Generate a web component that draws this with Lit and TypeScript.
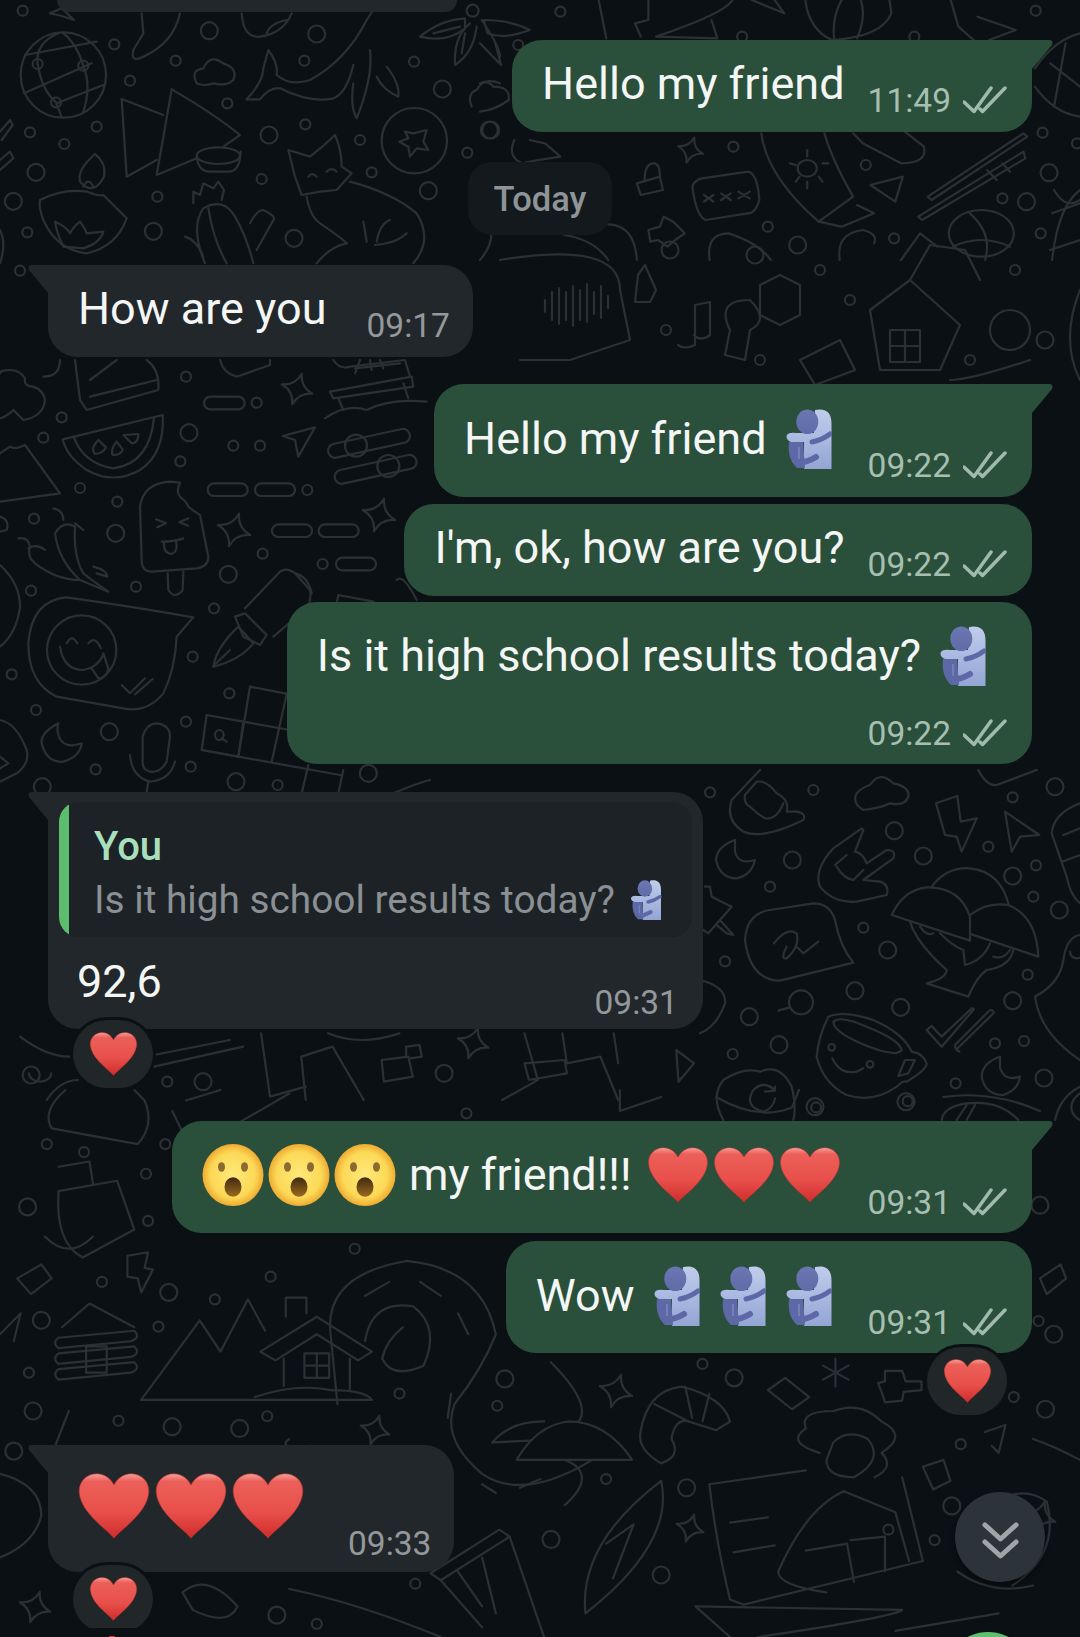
import { LitElement, html, css, svg } from 'lit';
import { customElement } from 'lit/decorators.js';

// wallpaper doodles, each group traced in the coordinates of a crop of the page
interface DoodleGroup {
  tx: number;
  ty: number;
  sx: number;
  sy: number;
  paths: string[];
  small: number[][];
  big: number[][];
  stars?: number[][];
}

const GROUPS: DoodleGroup[] = [
  {
    tx: 0, ty: 0, sx: 1 / 3, sy: 1 / 3,
    paths: [
      'M62 225 a128 128 0 1 0 256 0 a128 128 0 1 0 -256 0', 'M75 165 L290 125', 'M72 280 L275 190', 'M170 310 L310 255', 'M113 192 Q105 130 175 100', 'M113 192 Q125 270 168 307 L185 352', 'M250 197 Q230 130 190 100', 'M250 197 Q275 260 250 335',
      'M830 225 Q870 260 930 240 Q1040 180 1100 60 L1140 0', 'M740 298 Q790 245 790 205 L805 150 Q835 190 830 225', 'M740 298 L780 298 Q810 260 840 265 Q930 310 1000 295 Q1040 280 1060 195', 'M1110 150 Q1120 230 1070 355 Q1050 320 1060 250', 'M1160 200 Q1200 250 1195 290 Q1150 270 1130 230',
      'M365 297 L380 530 L470 480', 'M365 297 L490 345', 'M515 268 L470 525 L590 475', 'M515 268 Q640 340 720 405 L670 440', 'M590 467 a65 25 0 1 0 130 0 a65 25 0 1 0 -130 0', 'M590 470 Q595 515 630 515 L690 515 Q720 510 722 455',
      'M285 462 Q230 510 240 545 Q280 590 312 530 Q320 490 285 462Z', 'M250 560 Q265 530 280 560', 'M120 600 Q190 565 262 575 Q300 590 310 585 L380 655 Q350 740 260 760 Q170 750 130 660 Q115 620 120 600Z', 'M165 665 Q200 680 210 700 Q220 680 240 665 Q255 685 260 700 L310 695 Q300 730 250 745 L190 740 Q170 700 165 665Z',
      'M865 450 L930 470 Q970 440 1005 405 Q1025 450 1025 500 L1055 520 L1010 570 L960 575 L905 585 L885 530Z', 'M1050 545 Q1180 580 1250 640 Q1300 720 1240 790', 'M920 590 Q930 650 960 670 Q1020 710 1040 730', 'M1090 665 L1100 725', 'M1130 725 Q1140 670 1170 660', 'M1125 735 Q1190 730 1220 700', 'M950 790 Q990 740 1040 730', 'M925 530 Q935 515 950 530', 'M980 515 Q995 500 1010 515',
      'M615 790 Q570 680 610 625 Q670 590 705 650 Q740 710 760 790', 'M625 625 Q640 720 680 790', 'M580 610 L580 575 L600 585 L610 550 L640 565 L655 545 L672 570 L665 600', 'M555 710 Q590 720 610 770', 'M750 670 Q770 630 790 630 Q830 650 820 660 L770 750',
      'M1145 422 a98 98 0 1 0 196 0 a98 98 0 1 0 -196 0', 'M1215 395 L1240 400 L1280 390 L1270 425 L1285 450 L1250 445 L1230 470 L1225 440 L1198 425 L1225 415Z',
      'M1400 32 a18 18 0 1 0 36 0 a18 18 0 1 0 -36 0', 'M1395 55 Q1320 60 1260 110 Q1340 130 1395 85Z', 'M1410 70 Q1360 110 1365 195 Q1420 160 1430 80', 'M1445 60 Q1500 140 1500 170', 'M1300 100 L1380 80', 'M1395 100 L1385 160',
      'M400 150 Q390 190 430 170 Q520 130 540 40', 'M400 150 L430 100 L425 40', 'M590 250 Q570 210 610 205 Q630 160 670 190 Q715 205 700 240 Q680 260 640 250 Q610 260 590 250Z', 'M1415 320 Q1400 280 1430 270 Q1450 230 1500 250',
      'M725 40 Q730 115 780 110 Q850 100 875 40', 'M800 100 Q810 70 860 60', 'M150 40 L185 25 L222 60 L175 45Z', 'M0 395 L30 360 L38 375 L5 420', 'M0 480 L30 455 L40 475 L0 510', 'M0 690 Q20 730 0 790',
    ],
    small: [[68, 32], [343, 133], [527, 182], [913, 182], [1242, 185], [390, 242], [682, 310], [916, 373], [290, 380], [90, 397], [193, 432], [1080, 420], [1402, 458], [785, 537], [1115, 517], [472, 590], [82, 697], [60, 812], [113, 192], [250, 197], [168, 307]],
    big: [[628, 92], [950, 102], [1327, 267], [807, 405], [108, 517], [1285, 572], [40, 604], [460, 694], [882, 715], [1468, 390]],
  },
  {
    tx: 480, ty: 0, sx: 1 / 2.613, sy: 1 / 3,
    paths: [
      'M735 400 Q750 530 885 665 L975 590 Q920 480 900 400', 'M885 665 L945 680 L1030 640 L985 615', 'M975 400 L1000 430 L1100 490 Q1170 490 1160 440 L1110 395',
      'M855 450 L855 470', 'M810 490 L825 495', 'M895 490 L910 490', 'M825 545 L835 530', 'M885 530 L895 545', 'M855 565 L855 545', 'M830 505 a25 25 0 1 0 50 0 a25 25 0 1 0 -50 0',
      'M555 560 Q560 540 580 535 L700 515 Q725 520 730 600 Q720 640 700 640 L590 660 Q565 650 555 560Z', 'M585 585 L610 605 M610 585 L585 605 M630 580 L655 600 M655 580 L630 600 M675 575 L705 595 M705 575 L675 595',
      'M1170 590 L1420 400 L1430 410 L1180 600Z', 'M1145 650 L1420 455 L1425 475 L1155 660Z', 'M1325 510 L1350 540', 'M1365 490 L1385 515',
      'M1225 700 a85 70 0 1 1 170 0 a85 70 0 1 1 -170 0', 'M1235 740 Q1310 700 1385 740', 'M1280 640 Q1340 700 1320 780', 'M1500 570 Q1530 630 1568 600',
      'M1020 555 L1105 530 L1085 605Z', 'M410 550 L470 530 L478 570 L420 585Z', 'M430 540 Q430 490 455 490 Q470 490 470 530',
      'M440 690 L470 680 L480 650 L505 665 L535 700 L510 720 L490 740 L465 720 L445 725Z', 'M310 0 L330 115', 'M440 0 L440 60 L405 70 L420 110', 'M660 0 Q640 40 460 110 L620 115 L605 60', 'M850 0 Q860 90 920 120 Q1050 110 1075 40 L1070 0', 'M925 115 Q920 50 945 0', 'M985 115 Q1010 50 995 0', 'M1230 0 L1250 80 L1290 120', 'M1300 50 L1400 90 L1330 120', 'M710 0 L795 40 L770 0',
      'M1450 205 Q1500 120 1568 100', 'M1450 260 Q1500 340 1568 350', 'M1490 190 L1568 260', 'M1530 130 L1500 320', 'M10 60 Q80 60 130 90 Q60 120 20 100Z', 'M0 130 L55 195 L40 130', 'M0 250 Q20 240 35 260 Q80 260 75 300 Q40 330 0 335', 'M90 420 Q70 470 110 490 Q150 480 210 470 L170 430 L130 420', 'M0 620 Q60 700 0 780', 'M600 780 Q590 700 650 700 Q730 730 760 780', 'M940 780 Q930 700 1000 690 Q1040 700 1030 730', 'M1495 640 L1568 610', 'M1100 780 L1150 700 L1195 740', 'M1495 780 Q1510 620 1568 570', 'M250 700 Q400 620 410 780', 'M335 780 Q300 720 220 705',
    ],
    small: [[210, 35], [1452, 32], [685, 110], [1135, 110], [662, 440], [1008, 495], [1470, 398], [1560, 430], [1365, 595], [752, 680], [1082, 715], [1465, 700], [100, 135]],
    big: [[1487, 518], [1428, 605], [830, 735], [28, 390]],
    stars: [[550 / 2.613 + 480, 150, 13]],
  },
  {
    tx: 0, ty: 360, sx: 1 / 3, sy: 1 / 3,
    paths: [
      'M631 110 H715 a19 19 0 0 1 0 38 H631 a19 19 0 0 1 0 -38Z', 'M642 370 H724 a19 19 0 0 1 0 38 H642 a19 19 0 0 1 0 -38Z', 'M784 370 H866 a19 19 0 0 1 0 38 H784 a19 19 0 0 1 0 -38Z', 'M835 493 H917 a19 19 0 0 1 0 38 H835 a19 19 0 0 1 0 -38Z', 'M975 493 H1057 a19 19 0 0 1 0 38 H975 a19 19 0 0 1 0 -38Z', 'M1027 593 H1109 a19 19 0 0 1 0 38 H1027 a19 19 0 0 1 0 -38Z',
      'M1000 252 L1205 207 a21 21 0 0 1 9 41 L1009 293 a21 21 0 0 1 -9 -41Z', 'M1020 330 L1225 285 a21 21 0 0 1 9 41 L1029 371 a21 21 0 0 1 -9 -41Z', 'M1035 257 a33 33 0 1 0 66 0 a33 33 0 1 0 -66 0', 'M1132 318 a33 33 0 1 0 66 0 a33 33 0 1 0 -66 0',
      'M188 238 L488 165 Q495 280 420 330 Q340 375 260 330 Q200 290 188 238Z', 'M222 232 Q250 310 340 325 Q450 310 462 172', 'M295 240 Q270 265 285 282 Q310 280 318 262Z', 'M350 245 Q330 270 338 285 Q365 285 368 268Z', 'M370 225 L415 222 Q415 250 395 250Z',
      'M848 228 L945 202 L895 290 L885 240Z',
      'M425 600 L420 440 Q430 370 510 365 L540 368 Q525 400 545 415 Q560 425 565 440 Q590 460 600 465 L625 590 Q625 620 590 625 L455 635 Q425 635 425 600Z', 'M503 640 L505 690 Q525 720 548 690 L550 635', 'M468 478 L498 490 L472 502', 'M565 475 L538 487 L565 497', 'M485 545 Q520 545 550 535', 'M492 548 Q490 580 515 582 Q535 575 528 542',
      'M55 535 Q85 530 90 560 Q80 590 105 610 Q170 660 240 660 L325 695 Q260 650 250 640 Q220 590 225 500 Q190 480 165 520 Q175 600 240 660', 'M160 445 Q190 450 190 480', 'M85 565 Q110 550 135 570 M250 510 L225 490', 'M280 620 Q320 630 322 650 L290 640',
      'M640 920 Q650 860 715 800 L760 850 Q720 900 640 920Z', 'M705 770 L735 760 L800 825 L780 855 L730 830Z', 'M735 745 L840 635 Q860 620 885 640 L930 690 Q935 720 920 745 L820 830', 'M885 640 Q925 650 935 700', 'M640 918 L690 870',
      'M85 850 Q95 720 200 712 Q400 740 580 772 L530 830 Q525 930 490 1000 Q440 1060 370 1045 L170 1010 Q85 970 85 850Z', 'M141 870 a104 104 0 1 0 208 0 a104 104 0 1 0 -208 0', 'M180 860 Q190 930 250 930 Q290 925 310 885', 'M200 850 Q215 820 232 850', 'M265 850 Q285 825 303 865', 'M275 925 L295 955 Q320 955 325 925 L310 880', 'M365 975 L390 1000 L435 955', 'M405 1003 L458 957',
      'M175 1090 Q120 1120 125 1150 Q140 1210 190 1205 Q240 1190 245 1150 Q190 1170 175 1125 Q170 1105 175 1090Z',
      'M428 1200 L428 1130 Q440 1090 470 1090 Q510 1095 510 1130 L500 1205 Q480 1240 450 1235 Q425 1230 428 1200Z', 'M390 1185 Q395 1250 450 1265 Q510 1260 525 1205', 'M445 1265 L440 1295',
      'M620 1065 L605 1170 L715 1190 L730 1085Z', 'M750 980 L715 1190', 'M750 980 L870 1003', 'M730 1085 L870 1110', 'M605 1170 L1020 1245', 'M860 1003 L815 1205', 'M925 1215 L905 1300', 'M1030 1230 L1015 1300', 'M645 1125 a13 15 0 1 0 26 0 a13 15 0 1 0 -26 0 M665 1135 L680 1145',
      'M0 425 L180 400 L75 255 Q45 270 30 260 L0 280', 'M0 175 Q20 170 40 150 L70 180 Q130 170 135 120 Q130 90 100 80 Q70 80 75 55 Q60 30 30 30 Q0 30 0 40', 'M130 50 Q180 50 180 0',
      'M240 120 L260 150 L475 90 Q480 30 440 0', 'M225 0 L240 120', 'M270 60 L350 0', 'M270 110 L470 60', 'M1000 0 Q1020 30 1050 20 L1215 0 L1230 50', 'M990 95 L1235 50 L1240 80 L1000 115Z', 'M1015 115 L1030 150', 'M1210 70 L1225 115', 'M975 175 Q1040 130 1100 150 Q1170 115 1280 125', 'M1065 40 L1080 0', 'M1115 30 L1110 0', 'M1150 25 L1140 0', 'M1065 25 L1200 10', 'M660 0 Q670 40 710 50 L810 15 L810 0',
      'M0 615 Q60 670 60 740 Q50 820 0 860', 'M0 1080 Q50 1090 80 1170 Q90 1210 50 1240 L0 1265', 'M0 1190 L25 1210 L0 1225', 'M0 470 Q30 480 20 510 L0 515',
      'M1190 660 Q1210 640 1250 720 M1010 730 L1015 705 L1120 725', 'M1180 1300 Q1250 1270 1290 1260',
    ],
    small: [[558, 50], [770, 128], [185, 172], [130, 233], [700, 257], [780, 257], [541, 304], [240, 384], [352, 425], [922, 390], [102, 476], [788, 581], [968, 612], [408, 680], [93, 692], [642, 745], [578, 890], [35, 943], [688, 1000], [108, 1050], [558, 1085], [572, 1220], [287, 1228], [833, 1275]],
    big: [[567, 218], [347, 520], [685, 643], [328, 1115], [708, 1265], [127, 1280], [1105, 1240]],
    stars: [[297, 389, 16], [234, 530, 17], [379, 515, 17]],
  },
  {
    // strip under the quoted answer
    tx: 20, ty: 780, sx: 1 / 2.24, sy: 1 / 3,
    paths: [
      'M810 840 L870 830 L880 890 L815 905Z', 'M865 830 L865 800 L895 795 L900 830 L875 835', 'M300 825 L470 780', 'M300 860 L500 800', 'M1130 760 L1160 900 L1080 960', 'M1215 760 L1225 850 L1300 830 L1340 960', 'M1330 760 L1340 850', 'M1470 810 L1510 850 L1475 905Z', 'M640 960 L630 830 L700 800 L770 960', 'M540 760 L560 950 L640 920', 'M690 760 Q760 800 850 760', 'M20 880 a25 25 0 1 0 50 0', 'M60 960 Q90 900 130 900', 'M1130 850 L1220 840 L1225 880 L1140 900Z', 'M0 770 Q60 830 110 830',
    ],
    small: [[330, 905], [1000, 1000]],
    big: [[950, 880], [410, 905], [25, 885]],
    stars: [[20 + 1015 / 2.24, 1043, 16]],
  },
  {
    tx: 700, ty: 770, sx: 1 / 3, sy: 1 / 3,
    paths: [
      'M180 0 L95 90 Q75 150 130 185 Q190 210 310 150 Q320 130 290 125 L260 125 Q270 90 230 70 Q200 30 170 35 L135 75 Q130 100 150 110 Q170 130 195 145 Q230 150 250 100',
      'M490 120 Q455 100 470 70 Q490 50 510 45 Q540 0 580 40 Q630 50 625 80 Q615 110 570 100 Q540 115 490 120Z',
      'M708 100 L772 78 L782 155 L830 145 L785 245 L770 200 L735 195Z', 'M915 125 L1018 195 L960 200 L935 245Z',
      'M485 175 L400 235 Q340 300 360 350 Q400 400 470 395 L560 375 Q570 345 540 335 L490 330 L580 265 Q590 240 560 240 L500 280 Q490 250 465 245 L490 180Z', 'M410 290 Q430 325 460 330 L490 300', 'M440 255 L405 285',
      'M135 510 Q140 430 210 420 L340 400 Q390 400 405 450 Q420 530 460 578 L240 632 Q150 630 135 510Z', 'M222 520 Q260 470 290 490 Q300 530 260 565 Q240 570 260 530', 'M290 530 L310 550 L355 515',
      'M105 210 Q50 230 48 270 Q60 325 110 325 Q155 315 165 270 Q115 285 105 245Z',
      'M575 435 Q610 360 680 352 Q780 350 810 440 L810 512Z', 'M695 350 Q740 290 810 295 Q900 305 925 400', 'M810 435 Q860 395 925 405 Q1010 440 1015 560 L815 493', 'M630 455 Q650 520 740 600 Q740 625 680 640 L805 680 Q830 620 860 600 Q930 590 940 540', 'M880 560 Q910 570 930 540', 'M660 470 Q680 500 700 490', 'M720 490 Q760 530 790 540 L795 585 Q850 570 870 520',
      'M15 350 L30 350 L35 380 L95 410 L60 450 L25 490 L10 480', 'M60 450 L100 495 L80 490 L50 465', 'M235 722 L270 712', 'M267 697 a36 36 0 1 0 72 0 a36 36 0 1 0 -72 0',
      'M385 740 Q355 800 350 860 Q370 940 440 975 Q520 1000 590 950 Q610 930 620 935 Q680 900 680 880 Q670 850 635 845 Q610 790 520 750 Q430 720 385 740Z', 'M400 755 Q420 735 500 770 Q600 810 605 840 Q590 860 520 835 Q400 790 400 755Z', 'M397 865 Q420 915 470 905 L490 895', 'M595 918 L615 870 L645 870 L625 910Z', 'M385 832 a10 10 0 1 0 20 0 a10 10 0 1 0 -20 0', 'M500 883 a10 10 0 1 0 20 0 a10 10 0 1 0 -20 0',
      'M680 780 L725 830 L820 720 Q825 715 815 715 L725 800 L695 768Z', 'M770 838 L880 730 Q885 722 870 720 L765 825 Q765 840 778 845Z',
      'M900 860 Q845 880 845 920 Q855 975 910 975 Q955 960 960 920 Q915 935 900 895Z',
      'M1140 100 Q1060 130 1055 190 L1100 320 Q1110 375 1140 400', 'M1090 195 L1140 175', 'M1085 275 L1140 255', 'M1140 495 Q1100 500 1090 570 Q1080 640 1005 680 Q1020 790 1140 870', 'M1110 545 a20 20 0 1 0 40 0', 'M725 1050 Q730 1010 800 1000 Q900 990 955 1050', 'M770 1050 L800 1005', 'M800 1050 L825 1005', 'M70 1050 Q30 980 70 930 Q130 890 180 905 Q240 880 275 950 Q290 1010 280 1050', 'M225 960 Q190 930 160 960 Q130 1010 190 1025 Q220 1015 225 985', 'M195 965 L225 962 L225 950', 'M835 0 Q860 50 890 45 L1010 0', 'M0 630 Q80 650 75 700 Q50 770 0 790',
      'M1140 950 Q1080 980 1065 1050', 'M1140 970 Q1110 990 1115 1020 Q1120 1040 1140 1050',
    ],
    small: [[30, 67], [340, 60], [938, 82], [865, 230], [1008, 286], [210, 350], [1000, 380], [490, 473], [75, 574], [983, 614], [885, 820], [972, 813], [98, 852], [767, 940]],
    big: [[1065, 50], [583, 182], [277, 270], [670, 258], [938, 318], [1078, 420], [563, 540], [465, 662], [938, 692], [602, 712], [148, 740], [237, 824], [1032, 924], [345, 1010], [618, 995]],
  },
  {
    tx: 0, ty: 1090, sx: 1 / 1.452, sy: 1 / 2.866,
    paths: [
      'M378 750 L460 650 L540 750 L520 775 L460 700 L400 775Z', 'M412 770 L412 848', 'M508 770 L508 860', 'M442 755 H478 V825 H442Z', 'M460 755 V825', 'M442 790 H478', 'M415 650 L415 595 L445 595 L445 640',
      'M205 888 L290 660 L320 750 L360 600 L385 690', 'M205 888 H540', 'M370 880 Q430 840 480 860 Q530 860 540 888',
      'M90 680 L130 612 L195 680', 'M85 710 L195 690 Q205 710 190 720 L85 740 Q75 725 85 710Z', 'M85 755 L195 735 Q205 755 190 765 L85 785 Q75 770 85 755Z', 'M85 800 L195 780 Q205 800 190 810 L85 830 Q75 815 85 800Z', 'M125 735 H155 V810 H125Z',
      'M490 900 L480 700 Q470 530 590 490 Q700 510 720 700 Q700 800 660 900 Q640 1000 700 1100 Q760 1180 860 1060', 'M530 720 Q540 600 600 620 Q640 680 615 790 Q570 830 555 770 Q560 720 585 680', 'M530 590 L565 550', 'M610 550 L640 590', 'M665 640 L680 700', 'M655 870 L650 940', 'M700 1130 L720 1155', 'M755 1140 L785 1115',
      'M750 1060 H918 Q880 950 825 950 Q780 960 750 1060Z', 'M715 1010 Q740 950 790 950', 'M715 1010 L770 1005', 'M800 780 Q860 900 840 950', 'M820 1060 Q870 1100 820 1190',
      'M930 980 Q940 860 990 850 Q1050 880 1060 950 L1040 975 L1000 950 Q980 940 975 1000 Q990 1050 960 1070 Q925 1030 930 980Z', 'M950 900 L1000 950', 'M995 850 L1005 940', 'M1030 870 L1020 950',
      'M1115 860 L1140 825 L1175 880 L1150 915Z', 'M1213 770 L1213 850', 'M1195 790 L1232 830', 'M1232 790 L1195 830', 'M1285 805 L1310 805 L1315 835 L1338 835 L1338 860 L1312 865 L1310 890 L1285 895 L1280 865 L1275 840 L1285 835Z',
      'M1190 1040 Q1140 1010 1170 970 Q1160 920 1210 920 Q1250 890 1280 950 Q1320 990 1280 1040 Q1300 1080 1270 1110', 'M1210 1010 Q1230 970 1260 1000 Q1285 1060 1240 1110 Q1200 1110 1200 1060Z',
      'M1030 1130 L1170 1090', 'M1030 1130 Q1040 1300 1060 1460 L1080 1475 L1340 1350 L1310 1110', 'M1060 1240 L1115 1225', 'M1065 1325 L1125 1305', 'M1225 1150 L1300 1210 L1320 1350', 'M1225 1150 Q1170 1200 1130 1380 Q1130 1420 1200 1440', 'M1235 1290 L1285 1280 L1285 1380', 'M1170 1320 L1230 1300 L1240 1410', 'M1010 1480 L1310 1490 Q1300 1510 1100 1568', 'M1010 1480 L1060 1568',
      'M850 1500 Q840 1300 960 1120 Q980 1300 850 1500Z', 'M880 1300 L920 1245 L890 1400',
      'M625 1385 L725 1260 L740 1280 L640 1405Z', 'M640 1405 L700 1540', 'M740 1280 L790 1568', 'M665 1380 L700 1480', 'M700 1340 L720 1500',
      'M95 0 Q60 60 75 110 L200 155 Q225 100 210 30 L195 0', 'M85 290 L170 260 L195 400 L120 480 Q80 440 85 290', 'M85 220 L130 205 L135 270', 'M65 420 Q100 490 135 420', 'M185 475 L215 465 L210 510 L222 515 L205 580 L200 540 L185 535Z', 'M25 540 L60 500 L75 540 L45 585Z', 'M270 30 L320 0 M250 60 L275 160 L285 100', 'M1510 540 L1540 500 L1548 540 L1520 585Z', 'M1430 980 L1460 960 L1450 1040 L1440 1020', 'M1340 1080 L1370 1060 L1380 1120 L1355 1145Z', 'M1500 1000 Q1530 1020 1568 1060', 'M1370 20 Q1440 0 1510 60', 'M900 0 L900 60 L960 20', 'M1040 20 Q1100 90 1150 50 L1160 0', 'M1420 1210 Q1480 1120 1520 1180 Q1540 1330 1470 1420', 'M1390 1380 Q1440 1450 1500 1420', 'M1300 1550 L1450 1500', 'M500 1130 Q510 1030 450 1020 Q400 1030 420 1000', 'M0 1100 Q60 1130 60 1220 Q50 1300 0 1340', 'M350 90 L420 10', 'M0 700 L30 640 L20 720', 'M100 920 L80 1020',
      'M265 1440 Q300 1380 345 1480 Q330 1540 280 1490Z', 'M420 1430 Q520 1470 640 1568',
    ],
    small: [[68, 155], [122, 178], [240, 155], [212, 240], [215, 375], [148, 550], [393, 535], [515, 455], [312, 600], [230, 678], [42, 810], [172, 948], [388, 935], [722, 905], [580, 870], [1020, 785], [1290, 1260], [1395, 1015], [880, 1115], [1357, 1290], [603, 1415], [460, 1530], [1318, 32], [1185, 50], [1472, 880], [1508, 662]],
    big: [[40, 335], [245, 580], [60, 660], [48, 920], [250, 965], [348, 970], [20, 1035], [733, 828], [1066, 825], [1510, 330], [1530, 700], [1518, 915], [997, 1140], [800, 1288], [960, 1390], [1382, 1192], [402, 1505]],
    stars: [[616, 1391, 17], [35, 1607, 16], [375, 1430, 15], [690, 1528, 14], [1040, 1517, 16]],
  },
  {
    // the strip between the first answer and the double tick row
    tx: 470, ty: 230, sx: 1, sy: 1,
    paths: [
      'M30 30 Q150 10 150 60 L160 110 L100 130 L50 130', 'M75 70 V82 M82 62 V90 M89 58 V94 M96 62 V90 M103 56 V96 M110 60 V90 M117 54 V92 M124 62 V84 M131 56 V88 M138 66 V78',
      'M175 35 L186 60 L180 72 L165 72 L168 45Z', 'M225 75 L225 115 Q215 120 208 115 M225 75 L240 72 L240 105 Q230 112 224 105', 'M260 100 Q245 70 280 70 Q300 90 280 100 L275 130 L255 125Z', 'M310 45 L330 55 L330 85 L310 95 L290 85 L290 55Z',
      'M400 80 L440 50 L490 95 L470 140 L410 140Z', 'M420 100 H450 V132 H420Z', 'M435 100 V132', 'M420 116 H450', 'M440 50 L460 15 L495 20 L510 50',
      'M330 130 L370 110 L385 140 L345 155Z', 'M520 100 a20 20 0 1 0 40 0 a20 20 0 1 0 -40 0', 'M560 130 Q500 150 480 150', 'M610 60 Q590 110 610 150', 'M580 20 L610 10',
    ],
    small: [[196, 100], [290, 130], [500, 130], [545, 40], [380, 70], [350, 40]],
    big: [[200, 20], [575, 110], [285, 25]],
  },
];

function starPath(cx: number, cy: number, r: number) {
  const pts = [0, 1, 2, 3].map((k) => {
    const a = 0.3 + (k * Math.PI) / 2;
    return [cx + r * Math.cos(a), cy + r * Math.sin(a)];
  });
  const parts = pts.map((p, i) => {
    const n = pts[(i + 1) % 4];
    const c = [cx + (p[0] + n[0] - 2 * cx) * 0.18, cy + (p[1] + n[1] - 2 * cy) * 0.18];
    return `Q${c[0]} ${c[1]} ${n[0]} ${n[1]}`;
  });
  return `M${pts[0][0]} ${pts[0][1]} ${parts.join(' ')}Z`;
}

const heart = (cls: string) => html`<svg class="heart ${cls}" viewBox="0 0 48 44">
  <path fill="url(#heartFill)" stroke="#b9302c" stroke-width=".4" d="M24 43.5C20 38 2 27 .8 13 .3 5.5 6 .5 12.5 .5 18 .5 22 4 24 8 26 4 30 .5 35.5 .5 42 .5 47.7 5.5 47.2 13 46 27 28 38 24 43.5Z"></path>
</svg>`;

const face = () => html`<svg class="face" viewBox="0 0 62 62">
  <ellipse cx="31" cy="31" rx="30.500" ry="31" fill="url(#faceFill)"></ellipse>
  <ellipse cx="19.500" cy="23" rx="3.500" ry="4.800" fill="#8a6a30"></ellipse>
  <ellipse cx="42.500" cy="23" rx="3.500" ry="4.800" fill="#8a6a30"></ellipse>
  <ellipse cx="31" cy="43" rx="8.500" ry="9.800" fill="url(#mouthFill)"></ellipse>
</svg>`;

const hug = (cls = '') => html`<svg class="hug ${cls}" viewBox="0 0 46 60">
  <path fill="url(#hugLight)" d="M29 1C38 -1 45.500 2 45.500 14V60H18V33H5Q-1 30 1 26 3 23 10 24H28Z"></path>
  <ellipse cx="21.300" cy="12.800" rx="11" ry="12.300" fill="url(#hugDark)"></ellipse>
  <path fill="#5c69a6" d="M3 33Q1 50 11 59H19L17 33Z"></path>
  <path fill="none" stroke="#5c69a6" stroke-width="5" stroke-linecap="round" d="M26 33Q36 31 44 25"></path>
  <path fill="none" stroke="#5c69a6" stroke-width="6" stroke-linecap="round" d="M12 54Q22 53 30 48"></path>
  <path fill="none" stroke="#8c99cb" stroke-width="1" d="M13 38V50"></path>
</svg>`;

const ticks = () => html`<svg class="ticks" viewBox="0 0 44 29">
  <path fill="none" stroke="#a0bbab" stroke-width="3.500" stroke-linecap="round" stroke-linejoin="round" d="M1 17L11 26.500 28 3M17 24L19.500 26.500 42 3"></path>
</svg>`;

const meta = (time: string, read = true, cls = '') => html`<div class="meta ${cls}">
  <span class="time">${time}</span>${read ? ticks() : ''}
</div>`;

@customElement('app-root')
export class AppRoot extends LitElement {
  static styles = css`
    :host {
      display: block;
      width: 1080px;
      height: 1637px;
      overflow: hidden;
      position: relative;
      background: #0b1014;
      font-family: Roboto, 'Liberation Sans', sans-serif;
    }

    .wallpaper {
      position: absolute;
      inset: 0;
      width: 1080px;
      height: 1637px;
    }

    .wallpaper path,
    .wallpaper circle {
      fill: none;
      stroke: #2c3035;
      stroke-width: 2.2;
      stroke-linejoin: round;
      stroke-linecap: round;
      vector-effect: non-scaling-stroke;
    }

    .chat {
      position: relative;
      display: flex;
      flex-direction: column;
      height: 1637px;
    }

    .cut-off {
      align-self: flex-start;
      margin-left: 57px;
      width: 400px;
      height: 12px;
      background: #22272b;
      border-radius: 0 0 24px 24px;
    }

    .day {
      align-self: center;
      display: flex;
      align-items: center;
      height: 73px;
      padding: 0 26px;
      border-radius: 24px;
      background: #14191d;
      color: #8f9498;
      font-size: 34.500px;
      font-weight: 500;
    }

    .bubble {
      position: relative;
      display: flex;
      border-radius: 30px;
      color: #f3f6f4;
      font-size: 45px;
      line-height: 52px;
      padding: 18px 25px 22px 30px;
    }

    .out {
      align-self: flex-end;
      margin-right: 48px;
      background: #2a4f3b;
    }

    .in {
      align-self: flex-start;
      margin-left: 48px;
      background: #22272b;
      padding-right: 23px;
    }

    .out.tail {
      border-top-right-radius: 0;
    }

    .in.tail {
      border-top-left-radius: 0;
    }

    .out.tail::after {
      content: '';
      position: absolute;
      left: 100%;
      top: 0;
      width: 21px;
      height: 29px;
      background: inherit;
      clip-path: path('M0 0H17Q22 0 20 5L0 29Z');
    }

    .in.tail::after {
      content: '';
      position: absolute;
      right: 100%;
      top: 0;
      width: 20px;
      height: 28px;
      background: inherit;
      clip-path: path('M20 0H4Q-1 0 1 5L20 28Z');
    }

    .emoji-row {
      padding-top: 25px;
      padding-bottom: 27px;
    }

    .hello-hug {
      padding-bottom: 28px;
    }

    .faces {
      padding-top: 23px;
      padding-bottom: 27px;
    }

    .large {
      padding-top: 28px;
      padding-bottom: 33px;
    }

    .content {
      display: flex;
      align-items: center;
    }

    .txt {
      white-space: nowrap;
    }

    .friend {
      margin: 0 11px 0 13px;
    }

    .meta {
      align-self: flex-end;
      display: flex;
      align-items: flex-end;
      gap: 12px;
      margin-left: 23px;
      margin-bottom: -10px;
    }

    .emoji-row .meta {
      margin-left: 36px;
      margin-bottom: -16px;
    }

    .faces .meta {
      margin-left: 27px;
      margin-bottom: -16px;
    }

    .meta.far {
      margin-left: 40px;
    }

    .large .meta {
      margin-left: 39px;
      margin-bottom: -24px;
    }

    .time {
      font-size: 33.500px;
      line-height: 38px;
      color: #a6bfb0;
      white-space: nowrap;
    }

    .in .time {
      color: #94989b;
    }

    .ticks {
      width: 44px;
      height: 29px;
      margin-bottom: 6px;
    }

    .hug {
      width: 46px;
      height: 60px;
      flex: none;
      margin-left: 19px;
    }

    .hug.next {
      margin-left: 20px;
    }

    .face {
      width: 62px;
      height: 62px;
      flex: none;
      margin-right: 4px;
    }

    .face:nth-of-type(3) {
      margin-right: 0;
    }

    .heart {
      flex: none;
      display: block;
    }

    .heart.s {
      width: 49px;
      height: 44px;
    }

    .heart.m {
      width: 62px;
      height: 56px;
      margin-left: 4px;
    }

    .heart.l {
      width: 72px;
      height: 66px;
      margin-right: 5px;
    }

    .wrapped {
      flex-direction: column;
      padding: 24px 46px 11px 30px;
    }

    .wrapped .meta {
      margin: 29px -21px 0 0;
    }

    .reply {
      flex-direction: column;
      padding: 10px 11px 21px;
      border-top-left-radius: 0;
    }

    .quote {
      position: relative;
      padding: 24px 30px 16px 35px;
      background: #1d2226;
      border-radius: 20px;
      overflow: hidden;
    }

    .quote::before {
      content: '';
      position: absolute;
      left: 0;
      top: 0;
      bottom: 0;
      width: 10px;
      background: #5cbd6d;
    }

    .quote-from {
      font-size: 40px;
      line-height: 42px;
      font-weight: 500;
      color: #a8dfbc;
      margin-bottom: 11px;
    }

    .quote-line {
      display: flex;
      align-items: center;
      gap: 15px;
      font-size: 38.800px;
      line-height: 42px;
      color: #8b9094;
      white-space: nowrap;
    }

    .hug.mini {
      width: 32px;
      height: 40px;
      margin-left: 0;
    }

    .answer {
      display: flex;
      justify-content: space-between;
      padding: 19px 14px 0 18px;
    }

    .answer .meta {
      margin: 0 0 -14px;
    }

    .reaction {
      position: relative;
      display: flex;
      align-items: center;
      justify-content: center;
      width: 80px;
      height: 68px;
      border-radius: 34px;
      background: #212629;
      box-shadow: 0 0 0 3px #0b1014;
    }

    .reaction.left {
      align-self: flex-start;
      margin: -9px 0 0 73px;
    }

    .reaction.right {
      align-self: flex-end;
      margin: -6px 73px 0 0;
    }

    .reaction.cut {
      margin-top: -7px;
      clip-path: inset(-4px -4px 5px -4px);
    }

    .mt-6 { margin-top: 6px; }
    .mt-7 { margin-top: 7px; }
    .mt-8 { margin-top: 8px; }
    .mt-27 { margin-top: 27px; }
    .mt-28 { margin-top: 28px; }
    .mt-30 { margin-top: 30px; }
    .mt-33 { margin-top: 33px; }

    .fab {
      position: absolute;
      left: 955px;
      top: 1492px;
      width: 90px;
      height: 90px;
      border-radius: 50%;
      background: #2d3439;
      box-shadow: 0 5px 5px rgba(0, 0, 0, 0.3);
    }

    .fab svg {
      display: block;
      width: 90px;
      height: 90px;
    }

    .next-fab {
      position: absolute;
      left: 943px;
      top: 1632px;
      width: 90px;
      height: 90px;
      border-radius: 50%;
      background: #5cc06e;
    }

    .next-heart {
      position: absolute;
      left: 109px;
      top: 1636px;
      width: 6px;
      height: 1px;
      background: #d8322e;
    }
  `;

  private renderWallpaper() {
    return html`<svg class="wallpaper" viewBox="0 0 1080 1637">
      <defs>
        <linearGradient id="heartFill" x1="0" y1="0" x2="0" y2="1">
          <stop offset="0" stop-color="#f4a09a"></stop>
          <stop offset=".12" stop-color="#ec5f59"></stop>
          <stop offset=".6" stop-color="#e84f4a"></stop>
          <stop offset="1" stop-color="#cf2c2a"></stop>
        </linearGradient>
        <radialGradient id="faceFill" cx=".5" cy=".5" r=".52">
          <stop offset="0" stop-color="#ffe87a"></stop>
          <stop offset=".7" stop-color="#fcd957"></stop>
          <stop offset="1" stop-color="#eda42c"></stop>
        </radialGradient>
        <linearGradient id="mouthFill" x1="0" y1="0" x2="0" y2="1">
          <stop offset="0" stop-color="#3f2a10"></stop>
          <stop offset="1" stop-color="#9a6a1e"></stop>
        </linearGradient>
        <linearGradient id="hugLight" x1="0" y1="0" x2="0" y2="1">
          <stop offset="0" stop-color="#c0cdec"></stop>
          <stop offset="1" stop-color="#93a5d4"></stop>
        </linearGradient>
        <linearGradient id="hugDark" x1="0" y1="0" x2="0" y2="1">
          <stop offset="0" stop-color="#6a77b2"></stop>
          <stop offset="1" stop-color="#5f6ca8"></stop>
        </linearGradient>
      </defs>
      ${GROUPS.map((g) => svg`
        <g transform="translate(${g.tx} ${g.ty}) scale(${g.sx} ${g.sy})">
          ${g.paths.map((d) => svg`<path d=${d}></path>`)}
        </g>
        ${g.small.map(([x, y]) => svg`<circle cx=${g.tx + x * g.sx} cy=${g.ty + y * g.sy} r="5"></circle>`)}
        ${g.big.map(([x, y]) => svg`<circle cx=${g.tx + x * g.sx} cy=${g.ty + y * g.sy} r="8.5"></circle>`)}
        ${(g.stars ?? []).map(([x, y, r]) => svg`<path d=${starPath(x, y, r)}></path>`)}
      `)}
    </svg>`;
  }

  render() {
    return html`
      ${this.renderWallpaper()}
      <div class="chat">
        <div class="cut-off"></div>

        <div class="bubble out tail mt-28">
          <div class="content"><span class="txt">Hello my friend</span></div>
          ${meta('11:49')}
        </div>

        <div class="day mt-30">Today</div>

        <div class="bubble in tail mt-30">
          <div class="content"><span class="txt">How are you</span></div>
          ${meta('09:17', false, 'far')}
        </div>

        <div class="bubble out tail emoji-row hello-hug mt-27">
          <div class="content"><span class="txt">Hello my friend</span>${hug()}</div>
          ${meta('09:22')}
        </div>

        <div class="bubble out mt-7">
          <div class="content"><span class="txt">I'm, ok, how are you?</span></div>
          ${meta('09:22')}
        </div>

        <div class="bubble out wrapped mt-6">
          <div class="content"><span class="txt">Is it high school results today?</span>${hug()}</div>
          ${meta('09:22')}
        </div>

        <div class="bubble in tail reply mt-28">
          <div class="quote">
            <div class="quote-from">You</div>
            <div class="quote-line">Is it high school results today? ${hug('mini')}</div>
          </div>
          <div class="answer">
            <span>92,6</span>
            ${meta('09:31', false)}
          </div>
        </div>
        <div class="reaction left">${heart('s')}</div>

        <div class="bubble out tail emoji-row faces mt-33">
          <div class="content">
            ${face()}${face()}${face()}
            <span class="txt friend">my friend!!!</span>
            ${heart('m')}${heart('m')}${heart('m')}
          </div>
          ${meta('09:31')}
        </div>

        <div class="bubble out emoji-row mt-8">
          <div class="content">
            <span class="txt">Wow</span>${hug()}${hug('next')}${hug('next')}
          </div>
          ${meta('09:31')}
        </div>
        <div class="reaction right">${heart('s')}</div>

        <div class="bubble in tail large mt-30">
          <div class="content">${heart('l')}${heart('l')}${heart('l')}</div>
          ${meta('09:33', false)}
        </div>
        <div class="reaction left cut">${heart('s')}</div>
      </div>

      <div class="next-heart"></div>
      <div class="next-fab"></div>
      <div class="fab">
        <svg viewBox="0 0 90 90">
          <path fill="none" stroke="#a0a5a8" stroke-width="5" stroke-linecap="round" stroke-linejoin="round" d="M30 33L45.500 47 61 33M30 50L45.500 64 61 50"></path>
        </svg>
      </div>
    `;
  }
}

declare global {
  interface HTMLElementTagNameMap {
    'app-root': AppRoot;
  }
}
